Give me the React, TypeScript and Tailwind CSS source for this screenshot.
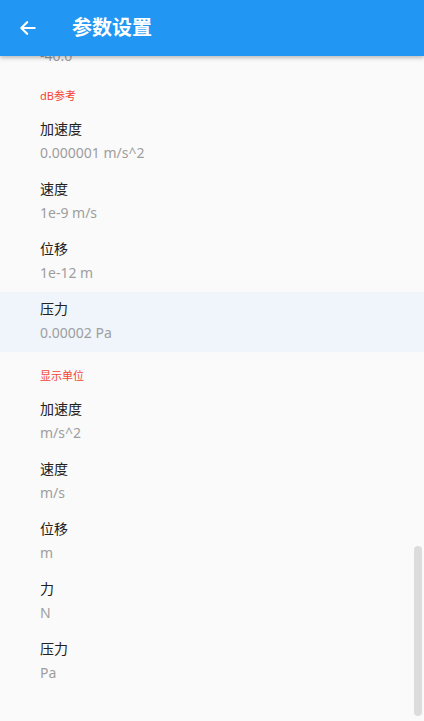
import React from "react";

type Row = { title: string; value: string; active?: boolean; first?: boolean };

const font = {
  fontFamily: '"Noto Sans", "Noto Sans CJK SC", sans-serif',
};

function Item({ title, value, active, first }: Row) {
  return (
    <div
      className={`${first ? "h-[55px]" : "h-[60px]"} pl-10 pr-4 flex flex-col justify-center ${
        active ? "bg-[#eff5fa]" : ""
      }`}
    >
      <div className="h-[22px] text-[14px] leading-[22px] text-[#212121]">{title}</div>
      <div className="h-[26px] text-[14px] leading-[26px] text-[#9e9e9e]">{value}</div>
    </div>
  );
}

function Section({ title }: { title: string }) {
  return (
    <div className="h-[40px] pl-10 pt-[16px] text-[11px] leading-[16px] text-[#f44336]">
      {title}
    </div>
  );
}

export default function App() {
  return (
    <div
      className="relative w-[424px] h-[721px] overflow-hidden bg-[#fafafa] flex flex-col"
      style={font}
    >
      <div className="relative z-10 h-[56px] shrink-0 bg-[#2196f3] flex items-center shadow-[0_2px_4px_rgba(0,0,0,0.25)]">
        <div className="w-[72px] flex items-center pl-[18px]">
          <svg width="20" height="20" viewBox="0 0 24 24" fill="none">
            <path
              d="M20 12H4.5M11 5l-7 7 7 7"
              stroke="white"
              strokeWidth="2.6"
              strokeLinecap="round"
              strokeLinejoin="round"
            />
          </svg>
        </div>
        <div className="text-white text-[20px] font-bold leading-none">参数设置</div>
      </div>
      <div className="-mt-[39px] flex flex-col">
        <Item title={"\u00a0"} value="-40.0" first />
        <Section title="dB参考" />
        <Item title="加速度" value="0.000001 m/s^2" />
        <Item title="速度" value="1e-9 m/s" />
        <Item title="位移" value="1e-12 m" />
        <Item title="压力" value="0.00002 Pa" active />
        <Section title="显示单位" />
        <Item title="加速度" value="m/s^2" />
        <Item title="速度" value="m/s" />
        <Item title="位移" value="m" />
        <Item title="力" value="N" />
        <Item title="压力" value="Pa" />
      </div>
      <div className="absolute right-[2px] top-[546px] w-[8px] h-[170px] rounded-full bg-[#dcdcdc]" />
    </div>
  );
}
